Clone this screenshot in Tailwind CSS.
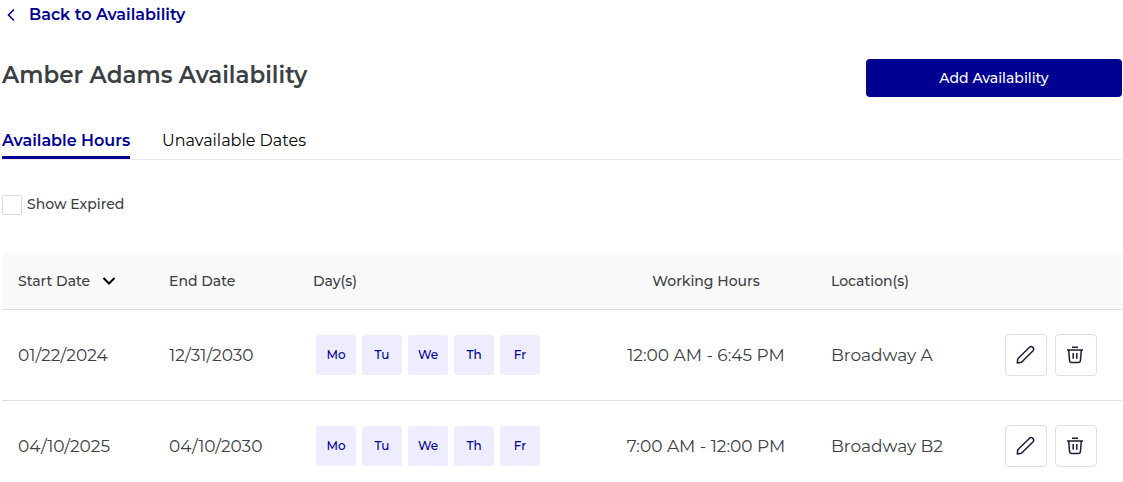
<!DOCTYPE html>
<html lang="en">
  <head>
    <meta charset="UTF-8" />
    <meta name="viewport" content="width=device-width, initial-scale=1.0" />
    <title>Amber Adams Availability</title>
    <script src="https://cdn.jsdelivr.net/npm/@tailwindcss/browser@4"></script>
  </head>
  <body class="bg-white font-['Montserrat','Inter',sans-serif] text-[#3b4043]">
    <main class="pl-0.5 pr-px">
      <a href="#" class="flex h-[30px] items-center gap-[11px] pl-1 text-base font-semibold text-[#000091]">
        <svg class="h-4 w-3" viewBox="0 0 12 16" fill="none" stroke="currentColor" stroke-width="1.6" aria-hidden="true">
          <path d="M8 2.5 2.5 8l5.5 5.5" />
        </svg>
        Back to Availability
      </a>

      <div class="mt-[29px] flex items-center justify-between">
        <h1 class="pb-1.5 text-[23px] leading-8 font-semibold">Amber Adams Availability</h1>
        <button type="button" class="h-[38px] w-64 rounded bg-[#000091] text-sm font-medium text-white">
          Add Availability
        </button>
      </div>

      <!-- Tabs -->
      <nav class="mt-7 flex h-[35px] gap-8 border-b border-[#ebebeb]">
        <a href="#" class="h-[34px] w-32 whitespace-nowrap border-b-3 border-[#000091] pt-1 text-base font-semibold text-[#000091]">Available Hours</a>
        <a href="#" class="pt-1 text-base text-black">Unavailable Dates</a>
      </nav>

      <label class="mt-[34px] flex h-[22px] w-fit items-center gap-[5px] text-sm font-medium">
        <input type="checkbox" class="size-5 appearance-none rounded-xs border border-[#d5dde5] bg-white checked:bg-[#000091]" />
        <span class="pb-0.5">Show Expired</span>
      </label>

      <table class="mt-[37px] w-full table-fixed text-left">
        <colgroup>
          <col class="w-[151px]" />
          <col class="w-36" />
          <col />
          <col class="w-[218px]" />
          <col class="w-[174px]" />
          <col class="w-[133px]" />
        </colgroup>
        <thead class="bg-[#f9f9f9] text-sm">
          <tr class="h-14 border-b border-[#dedede]">
            <th class="px-4 font-medium">
              <button type="button" class="flex items-center gap-3">
                Start Date
                <svg class="h-4 w-3.5" viewBox="0 0 14 16" fill="none" stroke="#000" stroke-width="2" aria-hidden="true">
                  <path d="M1.5 5 7 10.5 12.5 5" />
                </svg>
              </button>
            </th>
            <th class="px-4 font-medium">End Date</th>
            <th class="px-4 font-medium">Day(s)</th>
            <th class="px-4 text-center font-medium">Working Hours</th>
            <th class="px-4 font-medium">Location(s)</th>
            <th aria-label="Actions"></th>
          </tr>
        </thead>
        <tbody id="rows" class="text-[17px] leading-7"></tbody>
      </table>
    </main>

    <template id="row-template">
      <tr class="h-[91px] border-b border-[#dedede] last:border-b-0">
        <td class="px-4" data-field="start"></td>
        <td class="px-4" data-field="end"></td>
        <td class="px-4">
          <div class="mx-[3px] flex gap-1.5" data-field="days"></div>
        </td>
        <td class="whitespace-nowrap text-center" data-field="hours"></td>
        <td class="px-4" data-field="location"></td>
        <td>
          <div class="flex gap-2 pl-4">
            <button type="button" aria-label="Edit" class="flex size-[42px] items-center justify-center rounded border border-[#dedede] text-[#1c1b35]">
              <svg class="size-5" viewBox="0 0 20 20" fill="none" stroke="currentColor" stroke-width="1.5" stroke-linejoin="round" aria-hidden="true">
                <path d="M1.3 17.9 1.8 13.7 13.5 2.2Q15.2.9 16.8 2.4T17.1 5.7L5.5 17.3Z" />
              </svg>
            </button>
            <button type="button" aria-label="Delete" class="flex size-[42px] items-center justify-center rounded border border-[#dedede] text-[#1c1b35]">
              <svg class="size-5" viewBox="0 0 20 20" fill="none" stroke="currentColor" stroke-width="1.5" aria-hidden="true">
                <path d="M6 2.3h6M1 5h16M2.7 5l.8 10.2q.2 2.3 2.3 2.3h6.4q2.1 0 2.3-2.3L15.3 5M7.2 8v5.8M10.8 8v5.8" />
              </svg>
            </button>
          </div>
        </td>
      </tr>
    </template>

    <script>
      const availability = [
        { start: "01/22/2024", end: "12/31/2030", hours: "12:00 AM - 6:45 PM", location: "Broadway A" },
        { start: "04/10/2025", end: "04/10/2030", hours: "7:00 AM - 12:00 PM", location: "Broadway B2" },
      ];
      const days = ["Mo", "Tu", "We", "Th", "Fr"];
      const template = document.getElementById("row-template");
      const rows = document.getElementById("rows");

      availability.forEach((item) => {
        const row = template.content.cloneNode(true);
        ["start", "end", "hours", "location"].forEach((field) => {
          row.querySelector(`[data-field="${field}"]`).textContent = item[field];
        });
        days.forEach((day) => {
          const chip = document.createElement("span");
          chip.className =
            "flex size-10 items-center justify-center rounded-[3px] bg-[#eeedff] text-xs font-medium text-[#000091]";
          chip.textContent = day;
          row.querySelector('[data-field="days"]').appendChild(chip);
        });
        rows.appendChild(row);
      });
    </script>
  </body>
</html>
